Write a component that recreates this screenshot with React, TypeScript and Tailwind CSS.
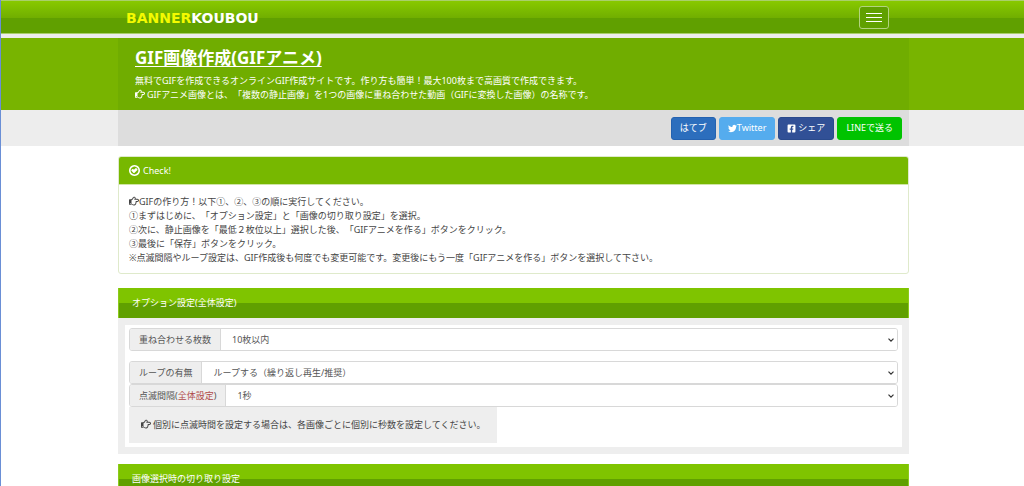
import type { ReactNode } from 'react'
import { FaFacebookSquare, FaRegHandPointRight, FaTwitter } from 'react-icons/fa'

function Shell({ children, className = '' }: { children: ReactNode; className?: string }) {
  return (
    <div className="pl-0.5">
      <div className={`mx-auto max-w-[791px] ${className}`}>{children}</div>
    </div>
  )
}

function CheckIcon() {
  return (
    <svg viewBox="128 128 1536 1536" className="size-[11px] shrink-0" fill="currentColor" aria-hidden="true">
      <path d="M1299 813l-422 422q-24 24-57 24t-57-24l-294-294q-24-24-24-57t24-57l128-128q24-24 57-24t57 24l102 102 230-230q24-24 57-24t57 24l128 128q24 24 24 57t-24 57zm141 83q0-148-73-273t-198-198-273-73-273 73-198 198-73 273 73 273 198 198 273 73 273-73 198-198 73-273zm224 0q0 209-103 385.5t-279.5 279.5-385.5 103-385.5-103-279.5-279.5-103-385.5 103-385.5 279.5-279.5 385.5-103 385.5 103 279.5 279.5 103 385.5z" />
    </svg>
  )
}

function Header() {
  return (
    <header className="border-b-4 border-[#ededed]">
      <div className="border-y border-[#a9cf6c] bg-[linear-gradient(#88c900_0%,#70ae00_54%,#60a000_54%,#60a000_100%)]">
        <Shell className="flex h-8 items-center justify-between pl-2 pr-5">
          <a
            href="#"
            className="pt-0.5 text-sm leading-4 font-bold text-white font-['DejaVu_Sans',sans-serif]"
          >
            <span className="text-[#f4fa00]">BANNER</span>KOUBOU
          </a>
          <button
            type="button"
            aria-label="メニュー"
            className="flex h-[23px] w-[30px] flex-col items-center justify-center gap-[3px] rounded-[3px] border border-[#b3d37f] bg-[#60a000]"
          >
            <span className="h-px w-4 bg-white" />
            <span className="h-px w-4 bg-white" />
            <span className="h-px w-4 bg-white" />
          </button>
        </Shell>
      </div>
    </header>
  )
}

function Hero() {
  return (
    <div className="bg-[#78b400] text-white">
      <Shell className="bg-[#70ad00] px-[17px] pt-2 pb-2">
        <h1 className="text-[17px] leading-6 font-bold underline underline-offset-2 [text-decoration-skip-ink:none]">
          GIF画像作成(GIFアニメ)
        </h1>
        <p className="pt-1">
          無料でGIFを作成できるオンラインGIF作成サイトです。作り方も簡単！最大100枚まで高画質で作成できます。
          <br />
          <FaRegHandPointRight className="mr-0.5 inline size-2.5 align-[-1px]" />
          GIFアニメ画像とは、「複数の静止画像」を1つの画像に重ね合わせた動画（GIFに変換した画像）の名称です。
        </p>
      </Shell>
    </div>
  )
}

function ShareBar() {
  const button = 'flex h-[23px] items-center rounded-[3px] border px-2 text-white'
  return (
    <div className="bg-[#ededed]">
      <Shell className="flex h-9 items-center justify-end gap-[3px] bg-[#ddd] px-[7px]">
        <a href="#" className={`${button} border-[#2462b0] bg-[#2c6ebd]`}>はてブ</a>
        <a href="#" className={`${button} border-[#55acee] bg-[#55acee]`}>
          <FaTwitter className="size-[9px]" />
          Twitter
        </a>
        <a href="#" className={`${button} gap-0.5 border-[#2a4a8c] bg-[#315096]`}>
          <FaFacebookSquare className="size-[9px]" />
          シェア
        </a>
        <a href="#" className={`${button} border-[#00c300] bg-[#00c300]`}>LINEで送る</a>
      </Shell>
    </div>
  )
}

function CheckPanel() {
  return (
    <section className="rounded-[3px] border border-[#dfeacb]">
      <h2 className="flex h-7 items-center gap-[3px] rounded-t-[2px] border-b border-[#cfe5a5] bg-[#77b800] px-2.5 text-white">
        <CheckIcon />
        Check!
      </h2>
      <div className="px-2.5 pt-2.5 pb-2">
        <p>
          <FaRegHandPointRight className="inline size-2.5 align-[-1px]" />
          GIFの作り方！以下①、②、③の順に実行してください。
        </p>
        <p>①まずはじめに、「オプション設定」と「画像の切り取り設定」を選択。</p>
        <p>②次に、静止画像を「最低２枚位以上」選択した後、「GIFアニメを作る」ボタンをクリック。</p>
        <p>③最後に「保存」ボタンをクリック。</p>
        <p>※点滅間隔やループ設定は、GIF作成後も何度でも変更可能です。変更後にもう一度「GIFアニメを作る」ボタンを選択して下さい。</p>
      </div>
    </section>
  )
}

function SectionTitle({ children }: { children: ReactNode }) {
  return (
    <h2 className="h-[30px] border-x border-[#8ccb1c] bg-[linear-gradient(#7fc400_50%,#60a000_50%)] px-[13px] leading-[30px] text-white">
      {children}
    </h2>
  )
}

function SelectRow({ id, label, options }: { id: string; label: ReactNode; options: string[] }) {
  return (
    <div className="flex h-[23px] rounded-[3px] border border-[#d8d8d8] text-[#555]">
      <label htmlFor={id} className="flex items-center rounded-l-[2px] border-r border-[#d8d8d8] bg-[#eee] px-[9px]">
        <span>{label}</span>
      </label>
      <div className="relative flex flex-1">
        <select id={id} className="w-full appearance-none rounded-r-[2px] bg-white px-[11px]">
          {options.map((option) => (
            <option key={option}>{option}</option>
          ))}
        </select>
        <svg
          viewBox="0 0 6 4"
          className="pointer-events-none absolute top-1/2 right-[3px] h-1 w-1.5 -translate-y-1/2"
          fill="none"
          stroke="#333"
          strokeWidth="1.2"
          aria-hidden="true"
        >
          <path d="M.5 .6 3 3.1 5.5 .6" />
        </svg>
      </div>
    </div>
  )
}

export default function App() {
  return (
    <div className="min-h-screen border-l border-[#6a8fd6] bg-white font-['Noto_Sans','Noto_Sans_CJK_JP',sans-serif] text-[9px] leading-[14px] text-[#444] [text-spacing-trim:space-all]">
      <Header />
      <Hero />
      <ShareBar />
      <Shell className="pt-2.5">
        <CheckPanel />
        <section className="pt-3.5">
          <SectionTitle>オプション設定(全体設定)</SectionTitle>
          <div className="border-[7px] border-[#eee] px-1 pt-[3px] pb-1">
            <SelectRow id="count" label="重ね合わせる枚数" options={['10枚以内', '20枚以内', '50枚以内', '100枚以内']} />
            <div className="pt-2.5">
              <SelectRow id="loop" label="ループの有無" options={['ループする（繰り返し再生/推奨）', 'ループしない']} />
              <SelectRow
                id="interval"
                label={<>点滅間隔(<span className="text-[#b04a48]">全体設定</span>)</>}
                options={['1秒', '2秒', '3秒']}
              />
            </div>
            <p className="w-fit bg-[#eee] px-3 py-[11px]">
              <FaRegHandPointRight className="mr-0.5 inline size-2.5 align-[-1px]" />
              個別に点滅時間を設定する場合は、各画像ごとに個別に秒数を設定してください。
            </p>
          </div>
        </section>
        <section className="pt-2.5">
          <SectionTitle>画像選択時の切り取り設定</SectionTitle>
        </section>
      </Shell>
    </div>
  )
}
